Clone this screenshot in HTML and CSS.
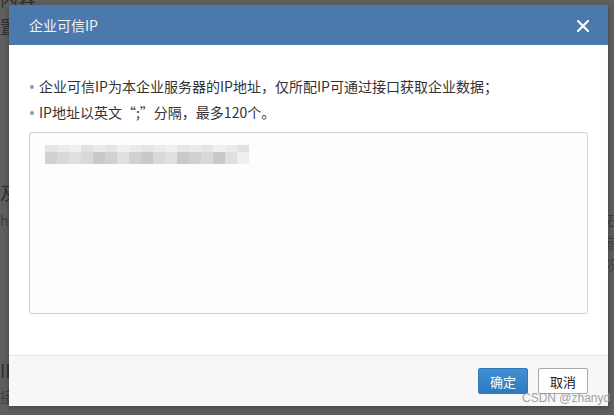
FILE: index.html
```html
<!DOCTYPE html>
<html lang="zh-CN">
<head>
    <meta charset="utf-8">
    <title>企业可信IP</title>
    <link rel="stylesheet" href="styles.css">
</head>
<body>
    <div class="backdrop">
        <span class="bg-text" style="left:0;top:-14px">内容</span>
        <span class="bg-text" style="left:0;top:14px">置</span>
        <span class="bg-text" style="left:0;top:180px">及</span>
        <span class="bg-text small" style="left:0;top:208px">hi</span>
        <span class="bg-text" style="left:0;top:358px">IP</span>
        <span class="bg-text small" style="left:0;top:384px">接口</span>
        <span class="bg-text small" style="left:606px;top:208px">石</span>
        <span class="bg-text small" style="left:606px;top:230px">前</span>
        <span class="bg-text small" style="left:606px;top:252px">况</span>
    </div>

    <div class="dialog">
        <div class="dialog-header">
            <span class="dialog-title">企业可信IP</span>
            <svg class="close" width="12" height="12" viewBox="0 0 12 12">
                <path d="M1 1L11 11M11 1L1 11" stroke="#fff" stroke-width="2.2" stroke-linecap="square"/>
            </svg>
        </div>
        <div class="dialog-body">
            <ul class="tips">
                <li>企业可信IP为本企业服务器的IP地址，仅所配IP可通过接口获取企业数据；</li>
                <li>IP地址以英文“;”分隔，最多120个。</li>
            </ul>
            <div class="ip-box">
                <div class="mosaic">
                    <i class="t2"></i><i class="t1"></i><i class="t3"></i><i class="t4"></i><i class="t1"></i><i class="t2"></i><i class="t3"></i><i class="t1"></i><i class="t2"></i><i class="t1"></i><i class="t3"></i><i class="t2"></i><i class="t1"></i><i class="t2"></i><i class="t3"></i><i class="t1"></i><i class="t4"></i>
                    <i class="b2"></i><i class="b1"></i><i class="b3"></i><i class="b1"></i><i class="b4"></i><i class="b2"></i><i class="b3"></i><i class="b2"></i><i class="b4"></i><i class="b1"></i><i class="b3"></i><i class="b4"></i><i class="b2"></i><i class="b1"></i><i class="b4"></i><i class="b3"></i><i class="b5"></i>
                </div>
            </div>
        </div>
        <div class="dialog-footer">
            <button class="btn btn-primary">确定</button>
            <button class="btn">取消</button>
        </div>
    </div>

    <span class="watermark">CSDN @zhanyd</span>
</body>
</html>
```

FILE: styles.css
```css
body{
    margin: 0;
    width: 614px;
    height: 415px;
    overflow: hidden;
    background-color: #5f5f5f;
    font-family: "Noto Sans CJK SC", "Liberation Sans", sans-serif;
    position: relative;
}
.backdrop{
    position: absolute;
    inset: 0;
}
.bg-text{
    position: absolute;
    color: #2f2f2f;
    font-size: 18px;
    line-height: 24px;
}
.bg-text.small{
    font-size: 14px;
    color: #3f3f3f;
}
.dialog{
    position: relative;
    margin: 5px 0 0 9px;
    width: 599px;
    height: 401px;
    background-color: #fff;
    display: flex;
    flex-direction: column;
    box-shadow: 0 2px 6px rgba(0, 0, 0, 0.3);
}
.dialog-header{
    height: 40px;
    background-color: #4c79ad;
    display: flex;
    align-items: center;
    justify-content: space-between;
    padding: 0 19px 0 20px;
}
.dialog-title{
    color: #f2f2f2;
    font-size: 14px;
    line-height: 20px;
}
.close{
    display: block;
    margin-top: 1px;
}
.dialog-body{
    flex: 1;
    padding: 28px 20px 0 20px;
}
.tips{
    list-style: none;
    margin: 0;
    padding: 0;
}
.tips li{
    position: relative;
    padding-left: 10px;
    font-size: 14px;
    line-height: 26px;
    color: #333;
}
.tips li::before{
    content: "";
    position: absolute;
    left: 1px;
    top: 12px;
    width: 4px;
    height: 4px;
    border-radius: 50%;
    background-color: #999;
}
.ip-box{
    box-sizing: border-box;
    margin-top: 7px;
    height: 182px;
    border: 1px solid #cfcfcf;
    border-radius: 3px;
    background-color: #fdfdfd;
    padding: 12px 0 0 15px;
}
.mosaic{
    display: grid;
    grid-template-columns: repeat(17, 12px);
    grid-template-rows: 7px 12px;
}
.mosaic i{
    display: block;
}
.t1{ background-color: #ebebeb; }
.t2{ background-color: #e5e5e5; }
.t3{ background-color: #f0f0f1; }
.t4{ background-color: #e1e1e1; }
.b1{ background-color: #d9d9d9; }
.b2{ background-color: #d1d1d1; }
.b3{ background-color: #dfdfdf; }
.b4{ background-color: #c9c9cb; }
.b5{ background-color: #eeeff0; }
.dialog-footer{
    height: 50px;
    border-top: 1px solid #e5e5e5;
    background-color: #f7f7f7;
    display: flex;
    align-items: center;
    justify-content: flex-end;
    gap: 10px;
    padding: 0 20px;
}
.btn{
    height: 26px;
    width: 50px;
    padding: 0;
    border: 1px solid #a9a9a9;
    border-radius: 2px;
    background-color: #fff;
    color: #222;
    font-family: "Noto Sans CJK SC", "Liberation Sans", sans-serif;
    font-size: 13px;
    cursor: pointer;
}
.btn-primary{
    border-color: #2f78bd;
    background: linear-gradient(#4190d3, #2f79bd);
    color: #fff;
}
.watermark{
    position: absolute;
    left: 522px;
    top: 391px;
    font-family: "Liberation Sans", sans-serif;
    font-size: 12px;
    color: rgba(150, 150, 150, 0.9);
}
```
